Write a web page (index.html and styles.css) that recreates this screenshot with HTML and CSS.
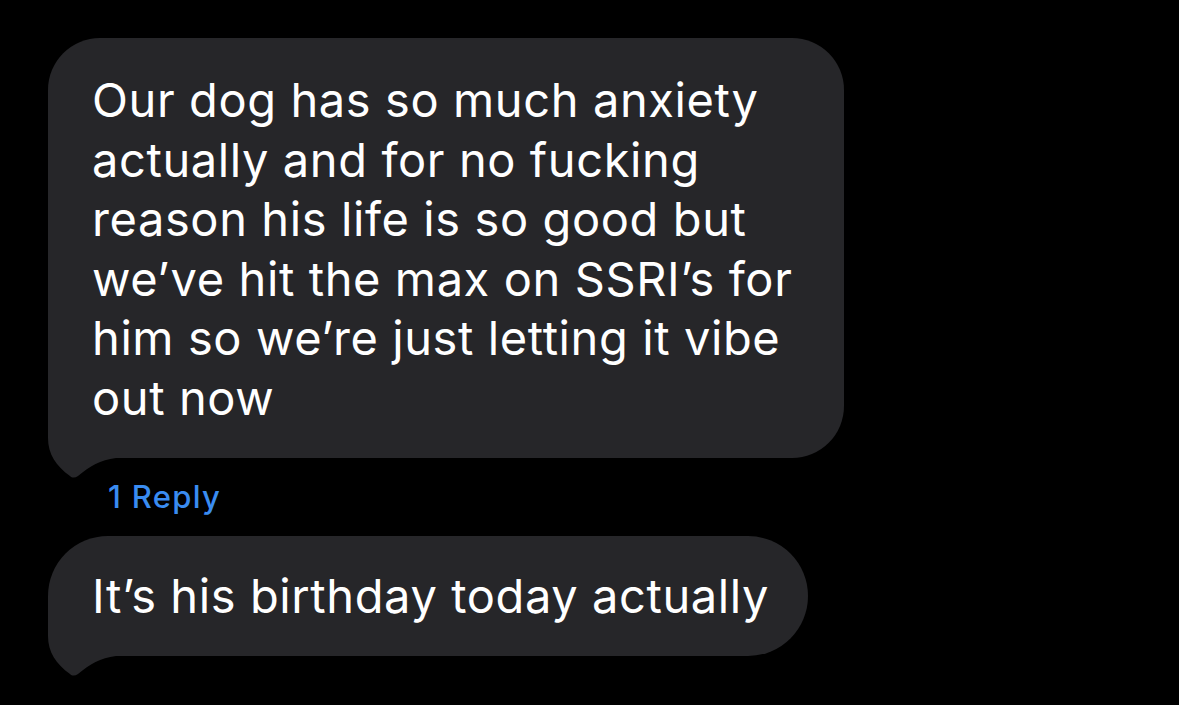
FILE: index.html
```html
<!DOCTYPE html>
<html lang="en">
<head>
    <meta charset="UTF-8">
    <title>Messages</title>
    <link rel="stylesheet" href="styles.css">
</head>
<body>
    <div class="thread">
        <div class="bubble bubble-long">
            <p class="text">Our dog has so much anxiety<br>actually and for no fucking<br>reason his life is so good but<br>we’ve hit the max on SSRI’s for<br>him so we’re just letting it vibe<br>out now</p>
            <svg class="tail" width="80" height="82" viewBox="0 0 80 82">
                <path d="M0 0 L0 40 C0 56 8 68 22 78 C24 80 27 80 30 78 C42 68 52 62 68 60 L68 0 Z" fill="#262629"/>
            </svg>
        </div>
        <div class="reply-count">1 Reply</div>
        <div class="bubble bubble-short">
            <p class="text">It’s his birthday today actually</p>
            <svg class="tail" width="80" height="82" viewBox="0 0 80 82">
                <path d="M0 0 L0 40 C0 56 8 68 22 78 C24 80 27 80 30 78 C42 68 52 62 68 60 L68 0 Z" fill="#262629"/>
            </svg>
        </div>
    </div>
</body>
</html>
```

FILE: styles.css
```css
body {
    margin: 0;
    background-color: #000;
    font-family: 'Inter', 'Roboto', sans-serif;
    height: 705px;
    overflow: hidden;
}

.thread {
    display: flex;
    flex-direction: column;
    align-items: flex-start;
    padding: 38px 0 0 48px;
}

.bubble {
    position: relative;
    background-color: #262629;
    border-radius: 52px;
    box-sizing: border-box;
}

.bubble-long {
    width: 796px;
    height: 420px;
    padding: 32px 0 0 44px;
}

.bubble-short {
    width: 760px;
    height: 120px;
    padding: 30px 0 0 44px;
    border-radius: 60px;
}

.text {
    position: relative;
    z-index: 1;
    margin: 0;
    color: #fff;
    font-size: 47px;
    line-height: 59.6px;
    letter-spacing: 0.6px;
}

.tail {
    position: absolute;
    left: 0;
    bottom: -22px;
}

.reply-count {
    color: #3a8cf1;
    font-size: 31px;
    font-weight: 500;
    letter-spacing: 1.3px;
    margin: 20px 0 21px 60px;
}
```
